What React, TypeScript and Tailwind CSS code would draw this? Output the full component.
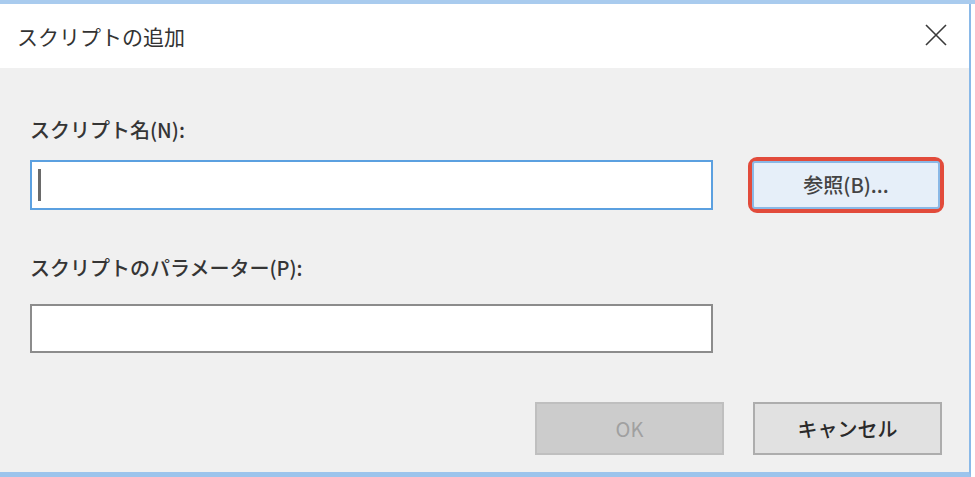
import React from "react";

const jp = { fontFamily: '"Noto Sans CJK JP", "Noto Sans", sans-serif' };

export default function App() {
  return (
    <div className="w-[975px] h-[477px] bg-white flex flex-col overflow-hidden" style={jp}>
      <div className="h-[4px] bg-[#a9cbee] shrink-0" />
      <div className="flex flex-1 min-h-0">
        <div className="w-[971px] flex flex-col border-r-2 border-[#8ab9e8] border-b-[5px] border-b-[#9cc4ec]">
          {/* title bar */}
          <div className="h-[64px] bg-white flex items-center justify-between pl-[17px] pr-[22px] shrink-0">
            <span className="text-[21px] leading-none text-[#333333] whitespace-nowrap pt-[1px]">
              スクリプトの追加
            </span>
            <svg width="22" height="22" viewBox="0 0 22 22" className="mt-[-2px]">
              <path d="M1 1 L21 21 M21 1 L1 21" stroke="#3a3a3a" strokeWidth="1.6" fill="none" />
            </svg>
          </div>
          {/* body */}
          <div className="flex-1 bg-[#f0f0f0] pl-[30px] pt-[49px] flex flex-col">
            <div className="h-[26px] leading-[26px] text-[20px] font-medium text-[#353535] whitespace-nowrap">
              スクリプト名(N):
            </div>
            <div className="mt-[14px] flex items-center h-[56px]">
              <div className="w-[683px] h-[50px] bg-white border-2 border-[#5ba0e0] pl-[6px] flex items-center">
                <div className="w-[3px] h-[32px] bg-[#6a6a6a]" />
              </div>
              <div className="ml-[35px] w-[196px] h-[56px] border-[4px] border-[#e24b3b] rounded-[9px]">
                <div className="w-full h-full bg-[#e6eff9] border-2 border-[#8ab8e6] rounded-[3px] flex items-center justify-center text-[20px] font-medium text-[#444444]">
                  参照(B)...
                </div>
              </div>
            </div>
            <div className="mt-[42px] h-[26px] leading-[26px] text-[20px] font-medium text-[#353535] whitespace-nowrap">
              スクリプトのパラメーター(P):
            </div>
            <div className="mt-[23px] w-[683px] h-[49px] bg-white border-2 border-[#8c8c8c]" />
            <div className="mt-[49px] flex justify-end pr-[27px] gap-[29px]">
              <div className="w-[189px] h-[53px] bg-[#cccccc] border-2 border-[#bfbfbf] flex items-center justify-center text-[20px] text-[#a0a0a0]">
                OK
              </div>
              <div className="w-[189px] h-[53px] bg-[#e1e1e1] border-2 border-[#adadad] flex items-center justify-center text-[20px] font-medium text-[#2a2a2a]">
                キャンセル
              </div>
            </div>
          </div>
        </div>
        <div className="flex-1 bg-white" />
      </div>
    </div>
  );
}
